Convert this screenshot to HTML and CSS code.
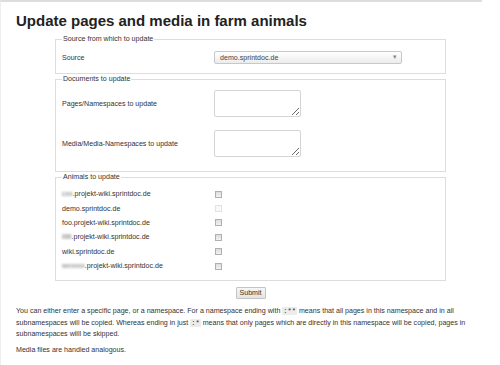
FILE: index.html
```html
<!DOCTYPE html>
<html lang="en">
<head>
    <meta charset="UTF-8">
    <title>Update pages and media in farm animals</title>
    <link rel="stylesheet" href="styles.css">
</head>
<body>
    <div class="page">
        <h1>Update pages and media in farm animals</h1>

        <form class="update-form">
            <fieldset>
                <legend>Source from which to update</legend>
                <div class="row">
                    <label class="label">Source</label>
                    <span class="select-wrap">
                        <select class="select">
                            <option>demo.sprintdoc.de</option>
                        </select>
                    </span>
                </div>
            </fieldset>

            <fieldset class="docs">
                <legend>Documents to update</legend>
                <div class="row">
                    <label class="label">Pages/Namespaces to update</label>
                    <textarea class="area"></textarea>
                </div>
                <div class="row">
                    <label class="label">Media/Media-Namespaces to update</label>
                    <textarea class="area"></textarea>
                </div>
            </fieldset>

            <fieldset class="animals">
                <legend>Animals to update</legend>
                <div class="row check-row">
                    <label class="label"><span class="blur">cxx</span>.projekt-wiki.sprintdoc.de</label>
                    <input type="checkbox" class="check">
                </div>
                <div class="row check-row">
                    <label class="label">demo.sprintdoc.de</label>
                    <input type="checkbox" class="check" disabled>
                </div>
                <div class="row check-row">
                    <label class="label">foo.projekt-wiki.sprintdoc.de</label>
                    <input type="checkbox" class="check">
                </div>
                <div class="row check-row">
                    <label class="label"><span class="blur">llllll</span>.projekt-wiki.sprintdoc.de</label>
                    <input type="checkbox" class="check">
                </div>
                <div class="row check-row">
                    <label class="label">wiki.sprintdoc.de</label>
                    <input type="checkbox" class="check">
                </div>
                <div class="row check-row">
                    <label class="label"><span class="blur">wxxxxx</span>.projekt-wiki.sprintdoc.de</label>
                    <input type="checkbox" class="check">
                </div>
            </fieldset>

            <div class="actions">
                <button type="button" class="submit">Submit</button>
            </div>
        </form>

        <p>You can either enter a specific page, or a namespace. For a namespace ending with <code>:**</code> means that all pages in this namespace and in all subnamespaces will be copied. Whereas ending in just <code>:*</code> means that only pages which are directly in this namespace will be copied, pages in subnamespaces willl be skipped.</p>
        <p>Media files are handled analogous.</p>
    </div>
</body>
</html>
```

FILE: styles.css
```css
* {
    margin: 0;
    padding: 0;
    box-sizing: border-box;
}
body {
    font-family: "Liberation Sans", Arial, sans-serif;
    font-size: 7.1px;
    color: #333;
    background: #fff;
}
.page {
    width: 482px;
    min-height: 365px;
    border-top: 2px solid #ddd;
    border-left: 1px solid #eee;
    padding: 0 10px 0 15px;
}
h1 {
    font-size: 15px;
    line-height: 17px;
    font-weight: bold;
    color: #222;
    margin-top: 10px;
}
.update-form {
    width: 391px;
    margin: 6px 0 0 39px;
}
fieldset {
    border: 1px solid #ddd;
    padding: 7px 6px 9px;
    margin-bottom: 1px;
}
legend {
    line-height: 9px;
    padding: 0 1px;
}
.row {
    display: flex;
    align-items: center;
}
.label {
    width: 152px;
    flex-shrink: 0;
}
.select-wrap {
    position: relative;
    display: block;
}
.select-wrap::after {
    content: '▾';
    position: absolute;
    right: 5px;
    top: 2px;
    font-size: 7px;
    color: #888;
}
.select {
    appearance: none;
    display: block;
    width: 188px;
    height: 13px;
    padding: 0 5px;
    font-family: inherit;
    font-size: 7.1px;
    color: #444;
    border: 1px solid #c8c8c8;
    border-radius: 2px;
    background: linear-gradient(#fff, #ececec);
}
.docs {
    padding: 6px 6px 14px;
}
.docs .row + .row {
    margin-top: 13px;
}
.area {
    width: 87px;
    height: 27px;
    border: 1px solid #d4d4d4;
    border-radius: 2px;
    font-family: inherit;
    background: #fff;
}
.animals {
    padding: 5px 6px 7px;
    margin-bottom: 6px;
}
.check-row {
    height: 14.4px;
}
.check {
    appearance: none;
    width: 7px;
    height: 7px;
    margin: 0 0 0 1px;
    border: 1px solid #b0b0b0;
    background: linear-gradient(#dcdcdc, #f2f2f2);
}
.check:disabled {
    border-color: #e2e2e2;
    background: #f8f8f8;
}
.blur {
    color: #777;
    filter: blur(1.1px);
}
.actions {
    text-align: center;
}
.submit {
    width: 30px;
    height: 12px;
    font-family: inherit;
    font-size: 7.1px;
    color: #333;
    border: 1px solid #c4c4c4;
    border-radius: 1px;
    background: linear-gradient(#f6f6f6, #e4e4e4);
}
p {
    line-height: 11.5px;
    margin-top: 7px;
}
p + p {
    margin-top: 4px;
}
code {
    font-family: "Liberation Mono", monospace;
    font-size: 7px;
    line-height: 1;
    padding: 0 1px;
    background: #ececec;
    border-radius: 1px;
}
```
